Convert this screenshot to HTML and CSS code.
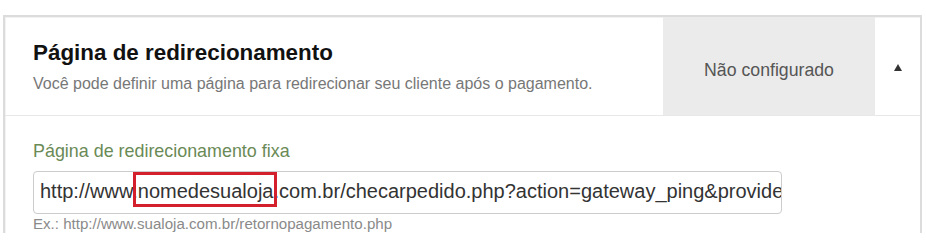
FILE: index.html
```html
<!DOCTYPE html>
<html lang="pt-BR">
<head>
<meta charset="utf-8">
<title>Página de redirecionamento</title>
<link rel="stylesheet" href="styles.css">
</head>
<body>
<div class="card">
  <div class="card-header">
    <div class="header-text">
      <h2 class="title">Página de redirecionamento</h2>
      <p class="subtitle">Você pode definir uma página para redirecionar seu cliente após o pagamento.</p>
    </div>
    <div class="status">Não configurado</div>
    <div class="toggle"><span class="caret"></span></div>
  </div>
  <div class="card-body">
    <label class="field-label">Página de redirecionamento fixa</label>
    <div class="field-input">http://www.<span class="highlight">nomedesualoja</span>.com.br/checarpedido.php?action=gateway_ping&amp;provide</div>
    <p class="hint">Ex.: http://www.sualoja.com.br/retornopagamento.php</p>
  </div>
</div>
</body>
</html>
```
FILE: styles.css
```css
html, body {
  margin: 0;
  padding: 0;
  background: #ffffff;
}
body {
  font-family: "Liberation Sans", Arial, sans-serif;
  width: 926px;
  height: 235px;
  overflow: hidden;
}
.card {
  margin: 15px 0 0 3px;
  width: 915px;
  border: 2px solid #dcdcdc;
  border-bottom: none;
  box-shadow: inset 1px 1px 0 #f2f2f2;
  background: #fff;
}
.card-header {
  display: flex;
  height: 98px;
  border-bottom: 1px solid #e8e8e8;
}
.header-text {
  flex: 1;
  padding: 23px 0 0 28px;
}
.title {
  margin: 0;
  font-size: 22.4px;
  line-height: 26px;
  font-weight: bold;
  color: #111111;
}
.subtitle {
  margin: 8px 0 0;
  font-size: 16px;
  line-height: 20px;
  color: #777777;
}
.status {
  width: 212px;
  background: #ebebeb;
  color: #555555;
  font-size: 17.7px;
  display: flex;
  align-items: center;
  justify-content: center;
  padding-top: 8px;
  box-sizing: border-box;
}
.toggle {
  width: 45px;
  display: flex;
  align-items: center;
  justify-content: center;
  padding-top: 2px;
  box-sizing: border-box;
}
.caret {
  width: 0;
  height: 0;
  border-left: 4px solid transparent;
  border-right: 4px solid transparent;
  border-bottom: 7px solid #333333;
}
.card-body {
  padding: 24px 0 0 28px;
}
.field-label {
  display: block;
  font-size: 17.9px;
  line-height: 22px;
  color: #6a8a56;
}
.field-input {
  margin-top: 9px;
  width: 749px;
  height: 43px;
  box-sizing: border-box;
  border: 1px solid #cccccc;
  border-radius: 4px;
  padding: 0 6px 2px;
  font-size: 20px;
  line-height: 39px;
  color: #333333;
  white-space: nowrap;
  overflow: hidden;
}
.highlight {
  display: inline-block;
  position: relative;
  line-height: 39px;
  vertical-align: baseline;
}
.highlight::after {
  content: "";
  position: absolute;
  left: -5px;
  right: -4px;
  top: 0;
  bottom: 4px;
  border: 3px solid #d3202c;
}
.hint {
  margin: 1px 0 0;
  font-size: 15.1px;
  line-height: 18px;
  color: #8a8a8a;
}
```
